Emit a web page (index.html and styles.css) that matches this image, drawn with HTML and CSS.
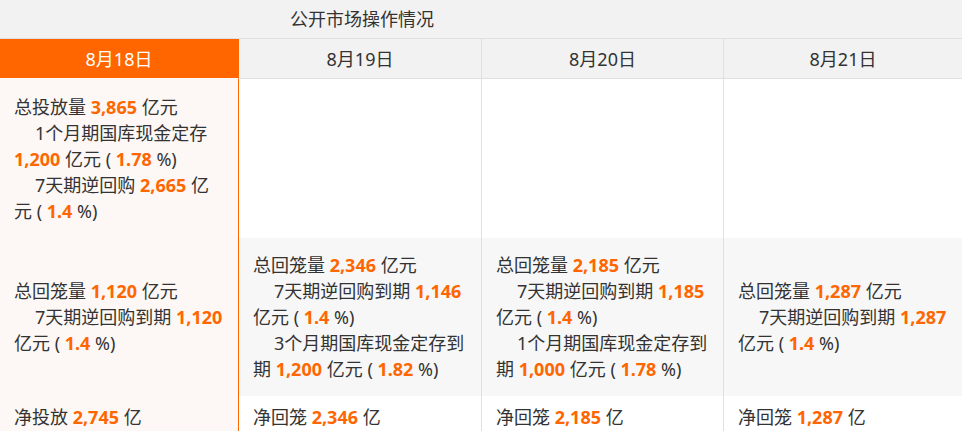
FILE: index.html
```html
<!DOCTYPE html>
<html lang="zh">
<head>
<meta charset="utf-8">
<title>公开市场操作情况</title>
<link rel="stylesheet" href="styles.css">
</head>
<body>
<div class="grid">
  <div class="cell title">公开市场操作情况</div>
  <div class="cell title-empty"></div>

  <div class="cell date active">8月18日</div>
  <div class="cell date c2">8月19日</div>
  <div class="cell date c3">8月20日</div>
  <div class="cell date c4">8月21日</div>

  <div class="cell body r3 first">
    <div>总投放量 <b>3,865</b> 亿元</div>
    <div class="item">1个月期国库现金定存 <b>1,200</b> 亿元 ( <b>1.78</b> %)</div>
    <div class="item">7天期逆回购 <b>2,665</b> 亿元 ( <b>1.4</b> %)</div>
  </div>
  <div class="cell body r3 c2"></div>
  <div class="cell body r3 c3"></div>
  <div class="cell body r3 c4"></div>

  <div class="cell body r4 first">
    <div>总回笼量 <b>1,120</b> 亿元</div>
    <div class="item">7天期逆回购到期 <b>1,120</b> 亿元 ( <b>1.4</b> %)</div>
  </div>
  <div class="cell body r4 c2">
    <div>总回笼量 <b>2,346</b> 亿元</div>
    <div class="item">7天期逆回购到期 <b>1,146</b> 亿元 ( <b>1.4</b> %)</div>
    <div class="item">3个月期国库现金定存到期 <b>1,200</b> 亿元 ( <b>1.82</b> %)</div>
  </div>
  <div class="cell body r4 c3">
    <div>总回笼量 <b>2,185</b> 亿元</div>
    <div class="item">7天期逆回购到期 <b>1,185</b> 亿元 ( <b>1.4</b> %)</div>
    <div class="item">1个月期国库现金定存到期 <b>1,000</b> 亿元 ( <b>1.78</b> %)</div>
  </div>
  <div class="cell body r4 c4">
    <div>总回笼量 <b>1,287</b> 亿元</div>
    <div class="item">7天期逆回购到期 <b>1,287</b> 亿元 ( <b>1.4</b> %)</div>
  </div>

  <div class="cell body r5 first">净投放 <b>2,745</b> 亿</div>
  <div class="cell body r5 c2">净回笼 <b>2,346</b> 亿</div>
  <div class="cell body r5 c3">净回笼 <b>2,185</b> 亿</div>
  <div class="cell body r5 c4">净回笼 <b>1,287</b> 亿</div>
</div>
</body>
</html>
```

FILE: styles.css
```css
html, body {
  margin: 0;
  padding: 0;
  background: #ffffff;
}

body {
  font-family: "Noto Sans", "Noto Sans CJK SC", sans-serif;
  font-size: 18px;
  color: #333333;
  overflow: hidden;
}

.grid {
  display: grid;
  grid-template-columns: 239px 243px 242px 238px;
  width: 962px;
}

.cell {
  box-sizing: border-box;
  line-height: 26px;
  overflow: hidden;
}

b {
  color: #ff6600;
  font-weight: bold;
}

.title {
  grid-column: 1 / span 3;
  height: 39px;
  background: #f2f2f2;
  border-bottom: 1px solid #e0e0e0;
  text-align: center;
  padding-top: 6px;
}

.title-empty {
  height: 39px;
  background: #f2f2f2;
  border-bottom: 1px solid #e0e0e0;
}

.date {
  height: 40px;
  background: #f2f2f2;
  border-bottom: 1px solid #e0e0e0;
  border-right: 1px solid #e0e0e0;
  text-align: center;
  padding-top: 7px;
}

.date.active {
  background: #ff6600;
  color: #ffffff;
  border-right: 1px solid #ff6600;
  border-bottom-color: #fdf8f5;
}

.body {
  padding-left: 14px;
  padding-right: 14px;
  border-right: 1px solid #e0e0e0;
}

.first {
  background: #fdf8f5;
  border-right: 1px solid #ff6600;
}

.c4 {
  border-right: none;
}

.r3,
.r4 {
  display: flex;
  flex-direction: column;
  justify-content: center;
}

.r3 {
  height: 159px;
}

.r4 {
  height: 158px;
}

.r4.c2,
.r4.c3,
.r4.c4 {
  background: #f7f7f7;
}

.r5 {
  height: 35px;
  padding-top: 8px;
}

.item {
  text-indent: 21px;
}
```
